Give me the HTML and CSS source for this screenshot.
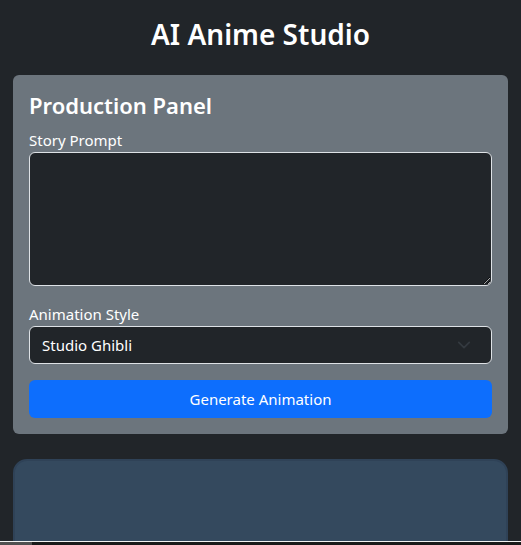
FILE: index.html
```html
<!DOCTYPE html>
<html lang="en">
<head>
<meta charset="utf-8">
<title>AI Anime Studio</title>
<link rel="stylesheet" href="styles.css">
</head>
<body>
<main class="container">
  <h1 class="title">AI Anime Studio</h1>
  <section class="panel">
    <h2 class="panel-title">Production Panel</h2>
    <div class="field">
      <label class="label" for="prompt">Story Prompt</label>
      <textarea id="prompt" class="control textarea" rows="5"></textarea>
    </div>
    <div class="field">
      <label class="label" for="style">Animation Style</label>
      <div class="select">
        <span class="select-value">Studio Ghibli</span>
        <svg class="chevron" width="16" height="16" viewBox="0 0 16 16"><path d="M2 5l6 6 6-6" fill="none" stroke="#343a40" stroke-width="2" stroke-linecap="round" stroke-linejoin="round"/></svg>
      </div>
    </div>
    <button class="btn" type="button">Generate Animation</button>
  </section>
  <section class="preview"></section>
</main>
<div class="hscroll"><div class="hscroll-thumb"></div></div>
</body>
</html>
```
FILE: styles.css
```css
html, body {
  margin: 0;
  padding: 0;
  background: #212529;
  color: #fff;
  font-family: "Noto Sans", "Open Sans", sans-serif;
  font-size: 15px;
  line-height: 1.5;
  overflow: hidden;
}
.container {
  padding: 16px 13px 0;
}
.title {
  margin: 0 0 23px;
  text-align: center;
  font-size: 28px;
  font-weight: 600;
  line-height: 36px;
}
.panel {
  background: #6c757d;
  border-radius: 6px;
  padding: 16px;
  margin-bottom: 25px;
}
.panel-title {
  margin: 0 0 8px;
  font-size: 22px;
  font-weight: 600;
  line-height: 29px;
}
.field {
  margin-bottom: 16px;
}
.label {
  display: block;
  line-height: 24px;
}
.control {
  display: block;
  box-sizing: border-box;
  width: 100%;
  background: #212529;
  border: 1px solid #dee2e6;
  border-radius: 6px;
  color: #fff;
  font: inherit;
}
.textarea {
  height: 134px;
  padding: 6px 12px;
  resize: vertical;
  margin: 0;
}
.select {
  display: flex;
  align-items: center;
  justify-content: space-between;
  box-sizing: border-box;
  height: 38px;
  padding: 0 20px 0 12px;
  background: #212529;
  border: 1px solid #dee2e6;
  border-radius: 6px;
}
.chevron {
  width: 14px;
  height: 14px;
}
.btn {
  display: block;
  width: 100%;
  height: 38px;
  background: #0d6efd;
  color: #fff;
  border: 0;
  border-radius: 6px;
  font: inherit;
}
.preview {
  height: 120px;
  background: #34495e;
  border: 2px solid #2f4257;
  border-radius: 14px;
}
.hscroll {
  position: fixed;
  left: 0;
  right: 0;
  bottom: 0;
  height: 3px;
  border-top: 1px solid #f2f2f2;
  background: #1a1a1a;
}
.hscroll-thumb {
  width: 32px;
  height: 100%;
  background: #505050;
}
```
